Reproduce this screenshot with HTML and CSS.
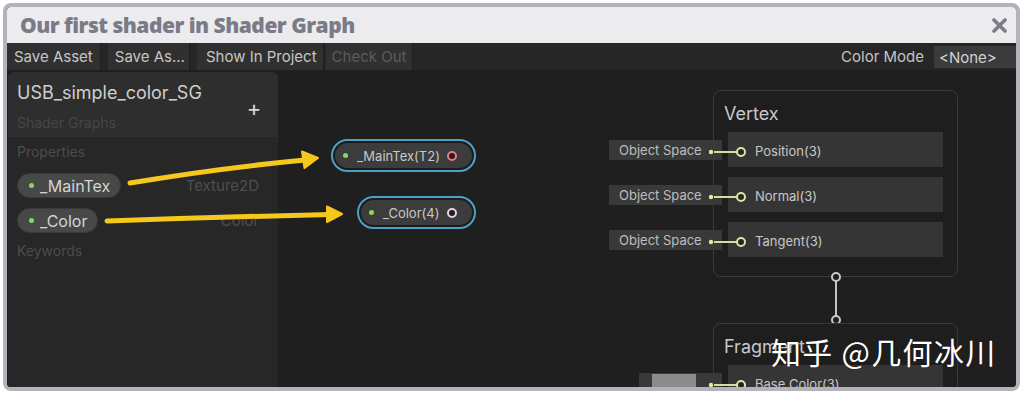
FILE: index.html
```html
<!DOCTYPE html>
<html>
<head>
<meta charset="utf-8">
<link rel="stylesheet" href="styles.css">
</head>
<body>
<div class="window">
  <div class="titlebar">
    <h1 class="title">Our first shader in Shader Graph</h1>
    <svg class="close" width="15" height="15" viewBox="0 0 15 15"><path d="M2 2 L13 13 M13 2 L2 13" stroke="#7c7c8a" stroke-width="3.6" stroke-linecap="round"/></svg>
  </div>
  <div class="toolbar">
    <span class="tb-btn">Save Asset</span>
    <span class="tb-btn tb-saveas">Save As...</span>
    <span class="tb-btn tb-tight">Show In Project</span>
    <span class="tb-btn tb-disabled">Check Out</span>
    <span class="tb-spacer"></span>
    <span class="tb-label">Color Mode</span>
    <span class="tb-dropdown">&lt;None&gt;</span>
  </div>
  <div class="workspace">
    <aside class="blackboard">
      <div class="bb-header">
        <div class="bb-titles">
          <div class="bb-name">USB_simple_color_SG</div>
          <div class="bb-sub">Shader Graphs</div>
        </div>
        <div class="bb-add">+</div>
      </div>
      <div class="bb-body">
        <div class="bb-section">Properties</div>
        <div class="bb-row">
          <span class="pill"><span class="dot"></span>_MainTex</span>
          <span class="bb-type">Texture2D</span>
        </div>
        <div class="bb-row">
          <span class="pill"><span class="dot"></span>_Color</span>
          <span class="bb-type">Color</span>
        </div>
        <div class="bb-section bb-keywords">Keywords</div>
      </div>
    </aside>
    <div class="canvas">
      <div class="prop-node node-maintex">
        <div class="prop-inner"><span class="dot"></span><span class="prop-label">_MainTex(T2)</span><span class="port port-red"></span></div>
      </div>
      <div class="prop-node node-color">
        <div class="prop-inner"><span class="dot"></span><span class="prop-label">_Color(4)</span><span class="port port-pink"></span></div>
      </div>

      <div class="stack-node node-vertex">
        <div class="stack-title">Vertex</div>
        <div class="stack-rows">
          <div class="slot">
            <div class="input-box">Object Space</div>
            <svg class="wire" width="40" height="12" viewBox="0 0 40 12"><circle cx="3" cy="6" r="2.2" fill="#e4e8a8"/><line x1="6" y1="6" x2="29" y2="6" stroke="#d8dc9c" stroke-width="2"/><circle cx="33" cy="6" r="4" fill="#262626" stroke="#e0e4a4" stroke-width="2"/></svg>
            Position(3)
          </div>
          <div class="slot">
            <div class="input-box">Object Space</div>
            <svg class="wire" width="40" height="12" viewBox="0 0 40 12"><circle cx="3" cy="6" r="2.2" fill="#e4e8a8"/><line x1="6" y1="6" x2="29" y2="6" stroke="#d8dc9c" stroke-width="2"/><circle cx="33" cy="6" r="4" fill="#262626" stroke="#e0e4a4" stroke-width="2"/></svg>
            Normal(3)
          </div>
          <div class="slot">
            <div class="input-box">Object Space</div>
            <svg class="wire" width="40" height="12" viewBox="0 0 40 12"><circle cx="3" cy="6" r="2.2" fill="#e4e8a8"/><line x1="6" y1="6" x2="29" y2="6" stroke="#d8dc9c" stroke-width="2"/><circle cx="33" cy="6" r="4" fill="#262626" stroke="#e0e4a4" stroke-width="2"/></svg>
            Tangent(3)
          </div>
        </div>
      </div>

      <svg class="link" width="12" height="54" viewBox="0 0 12 54"><line x1="6" y1="5" x2="6" y2="48" stroke="#c4c4c4" stroke-width="2"/><circle cx="6" cy="5" r="4" fill="#1f1f1f" stroke="#c8c8c8" stroke-width="2"/><circle cx="6" cy="48" r="4" fill="#1f1f1f" stroke="#c8c8c8" stroke-width="2"/></svg>

      <div class="stack-node node-fragment">
        <div class="stack-title">Fragment</div>
        <div class="stack-rows">
          <div class="slot">
            <div class="input-box color-box"><span class="swatch"></span></div>
            <svg class="wire" width="40" height="12" viewBox="0 0 40 12"><circle cx="3" cy="6" r="2.2" fill="#e4e8a8"/><line x1="6" y1="6" x2="29" y2="6" stroke="#d8dc9c" stroke-width="2"/><circle cx="33" cy="6" r="4" fill="#262626" stroke="#e0e4a4" stroke-width="2"/></svg>
            Base Color(3)
          </div>
        </div>
      </div>

      <div class="watermark">知乎 @几何冰川</div>
    </div>

    <svg class="arrows" width="1010" height="317" viewBox="7 70 1010 317">
      <path d="M130 183 Q 220 168 305 160" fill="none" stroke="#f4c81c" stroke-width="5" stroke-linecap="round"/>
      <polygon points="318,158 302,151.5 304.5,168" fill="#f4c81c" stroke="#f4c81c" stroke-width="2" stroke-linejoin="round"/>
      <path d="M107 221 Q 220 217 330 214.5" fill="none" stroke="#f4c81c" stroke-width="5" stroke-linecap="round"/>
      <polygon points="342,214 327,206.5 327,222" fill="#f4c81c" stroke="#f4c81c" stroke-width="2" stroke-linejoin="round"/>
    </svg>
  </div>
</div>
</body>
</html>
```
FILE: styles.css
```css
* { box-sizing: border-box; }
html, body { margin: 0; padding: 0; background: #ffffff; }
body { width: 1024px; height: 393px; overflow: hidden; font-family: "Inter", "Noto Sans", sans-serif; }

.window {
  margin: 3px 0 0 3px;
  width: 1017px;
  height: 388px;
  border: 4px solid #b3b3bb;
  border-radius: 8px;
  overflow: hidden;
  display: flex;
  flex-direction: column;
  background: #1f1f1f;
}

.titlebar {
  height: 36px;
  flex: none;
  background: #ececee;
  display: flex;
  align-items: center;
  padding: 0 9px 0 13px;
}
.title {
  margin: 0;
  flex: 1;
  font-family: "Open Sans", "Lato", sans-serif;
  font-weight: 800;
  font-size: 21px;
  letter-spacing: -0.5px;
  color: #7b7b88;
}
.close { flex: none; margin-top: 1px; }

.toolbar {
  height: 27px;
  flex: none;
  background: #262626;
  display: flex;
  align-items: stretch;
  font-size: 15px;
  color: #c6c6c6;
}
.tb-btn {
  display: flex;
  align-items: center;
  padding: 0 7px;
  margin-right: 7px;
  background: #303030;
  border-right: 1px solid #1e1e1e;
}
.tb-saveas { padding: 0 4px 0 7px; }
.tb-tight { margin-right: 2px; padding: 0 6px 0 9px; }
.tb-disabled { color: #5c5c5c; padding: 0 6px 0 6px; }
.tb-spacer { flex: 1; }
.tb-label { display: flex; align-items: center; margin-right: 10px; color: #c4c4c4; }
.tb-dropdown {
  display: flex;
  align-items: center;
  width: 82px;
  margin: 3px 0 2px;
  padding-left: 5px;
  background: #3b3b3b;
  color: #d2d2d2;
}

.workspace {
  flex: 1;
  display: flex;
  position: relative;
  background: #1f1f1f;
}

.blackboard {
  width: 270px;
  margin: 2px 0 0 1px;
  display: flex;
  flex-direction: column;
  background: #272727;
  border-radius: 6px 6px 0 0;
  overflow: hidden;
}
.bb-header {
  height: 66px;
  background: #2e2e2e;
  display: flex;
  align-items: flex-start;
  padding: 10px 0 0 9px;
  border-bottom: 1px solid #252525;
}
.bb-titles { flex: 1; }
.bb-name { font-size: 18px; line-height: 22px; color: #cfcfcf; }
.bb-sub { font-size: 14px; line-height: 20px; color: #464646; margin-top: 9px; }
.bb-add {
  width: 30px;
  margin: 14px 9px 0 0;
  font-size: 22px;
  line-height: 24px;
  color: #d6d6d6;
  text-align: center;
}
.bb-body { flex: 1; padding: 4px 19px 0 9px; }
.bb-section { font-size: 14px; line-height: 20px; color: #4c4c4c; }
.bb-row {
  display: flex;
  align-items: center;
  justify-content: space-between;
  margin-top: 11px;
}
.bb-row + .bb-row { margin-top: 10px; }
.bb-keywords { margin-top: 8px; }
.pill {
  display: inline-flex;
  align-items: center;
  height: 25px;
  padding: 0 10px 0 11px;
  background: #484848;
  border: 1px solid #3a3a3a;
  border-radius: 13px;
  font-size: 16px;
  color: #d4d4d4;
}
.dot {
  width: 5px;
  height: 5px;
  border-radius: 50%;
  background: #84dc5a;
  margin-right: 6px;
  flex: none;
}
.bb-type { font-size: 15px; color: #4e4e4e; }

.canvas { flex: 1; position: relative; overflow: hidden; }

.prop-node {
  position: absolute;
  border: 2px solid #4ca0cc;
  border-radius: 17px;
  padding: 2px;
  background: #1c1c1c;
}
.node-maintex { left: 53px; top: 69px; width: 145px; }
.node-color { left: 79px; top: 126px; width: 119px; }
.prop-inner {
  height: 25px;
  display: flex;
  align-items: center;
  padding: 0 15px 0 8px;
  background: #3c3c3c;
  border-radius: 13px;
}
.prop-inner .dot { margin-right: 9px; }
.prop-label { flex: 1; font-size: 13px; color: #c8c8c8; }
.port {
  width: 10px;
  height: 10px;
  border-radius: 50%;
  border: 2px solid #e07e80;
  background: #301818;
}
.port-pink { border-color: #e6d2e4; background: #251c24; }

.stack-node {
  position: absolute;
  left: 435px;
  width: 245px;
  border: 1px solid #3a3a3a;
  border-radius: 8px;
  background: #1e1e1e;
  padding: 0 14px 0 14px;
}
.node-vertex { top: 20px; height: 187px; }
.node-fragment { top: 253px; height: 120px; }
.stack-title {
  height: 41px;
  padding-top: 12px;
  margin-left: -4px;
  font-size: 18px;
  line-height: 22px;
  color: #c8c8c8;
}
.stack-rows { display: flex; flex-direction: column; gap: 10px; }
.slot {
  position: relative;
  height: 35px;
  background: #353535;
  padding: 11px 0 0 27px;
  font-size: 13px;
  line-height: 16px;
  color: #c8c8c8;
}
.input-box {
  position: absolute;
  right: calc(100% + 6px);
  top: 8px;
  width: 113px;
  height: 20px;
  padding-left: 10px;
  background: #393939;
  font-size: 13px;
  line-height: 20px;
  color: #bebebe;
  white-space: nowrap;
}
.color-box { width: 83px; padding-left: 13px; }
.swatch { display: block; width: 44px; height: 19px; margin-top: 1px; background: #8c8c8c; }
.wire { position: absolute; left: -20px; top: 14px; }

.link { position: absolute; left: 552px; top: 202px; }

.watermark {
  position: absolute;
  left: 493px;
  top: 263px;
  font-family: "Noto Sans CJK SC", sans-serif;
  font-size: 30px;
  line-height: 36px;
  letter-spacing: 1.3px;
  color: #ffffff;
  text-shadow: 0 0 2px rgba(0,0,0,0.4);
  white-space: nowrap;
}

.arrows { position: absolute; left: 0; top: 0; pointer-events: none; }
```
